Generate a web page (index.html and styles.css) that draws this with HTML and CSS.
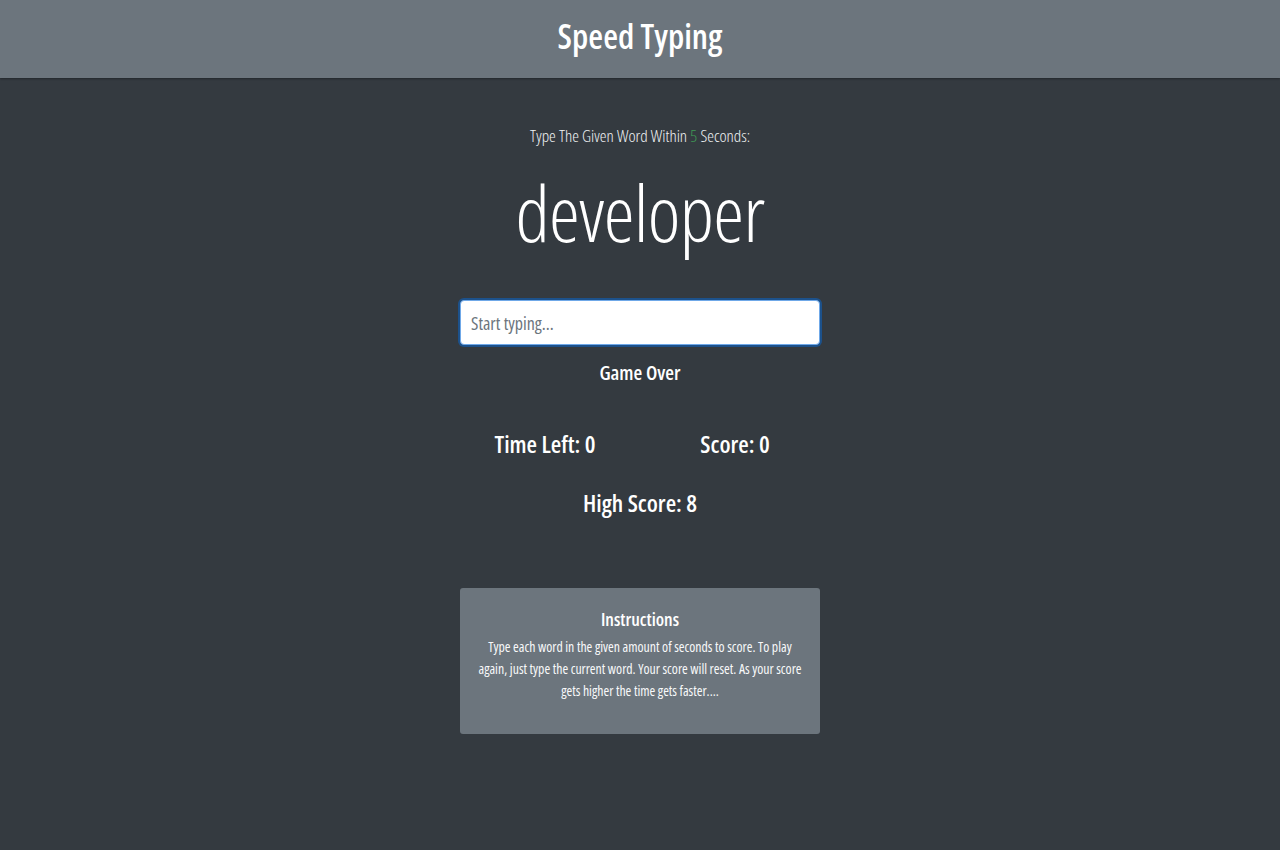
FILE: index.html
```html
<!DOCTYPE html>
<html lang="en">
<head>
<meta charset="utf-8">
<title>Speed Typing</title>
<link rel="stylesheet" href="styles.css">
</head>
<body>
<header class="topbar">
  <h1 class="brand">Speed Typing</h1>
</header>
<main class="game">
  <p class="lead">Type The Given Word Within <span class="secs">5</span> Seconds:</p>
  <h2 class="word">developer</h2>
  <input class="word-input" type="text" placeholder="Start typing..." autofocus>
  <h4 class="status">Game Over</h4>
  <div class="scores">
    <h3 class="stat">Time Left: 0</h3>
    <h3 class="stat">Score: 0</h3>
  </div>
  <h3 class="stat high">High Score: 8</h3>
  <section class="card">
    <h5 class="card-title">Instructions</h5>
    <p class="card-text">Type each word in the given amount of seconds to score. To play again, just type the current word. Your score will reset. As your score gets higher the time gets faster....</p>
  </section>
</main>
</body>
</html>
```
FILE: styles.css
```css
* { box-sizing: border-box; }
html, body { margin: 0; padding: 0; }
body {
  background: #343a40;
  color: #fff;
  font-family: "Open Sans", "Noto Sans", "Liberation Sans", sans-serif;
  font-stretch: 75%;
  min-height: 850px;
}
.topbar {
  height: 78px;
  padding-bottom: 5px;
  background: #6c757d;
  display: flex;
  align-items: center;
  justify-content: center;
  box-shadow: 0 1px 2px rgba(0,0,0,.35);
}
.brand {
  margin: 0;
  font-size: 34px;
  font-weight: 600;
  line-height: 1.2;
}
.game {
  display: flex;
  flex-direction: column;
  align-items: center;
  padding-top: 46px;
}
.lead {
  margin: 0;
  font-size: 17px;
  line-height: 24px;
  font-weight: 300;
  color: #f1f3f5;
}
.secs { color: #3f9a55; }
.word {
  margin: 16px 0 0;
  font-size: 78px;
  line-height: 96px;
  font-weight: 300;
  letter-spacing: -0.6px;
}
.word-input {
  margin-top: 40px;
  width: 360px;
  height: 45px;
  padding: 0 10px;
  font: inherit;
  font-size: 18px;
  color: #495057;
  background: #fff;
  border: 1px solid #6fa8e8;
  border-radius: 4px;
  box-shadow: 0 0 0 2px rgba(0,110,230,.45);
  outline: none;
}
.word-input::placeholder { color: #6c757d; }
.status {
  margin: 13px 0 0;
  font-size: 20px;
  line-height: 30px;
  font-weight: 600;
}
.scores {
  margin-top: 38px;
  display: grid;
  grid-template-columns: 190px 190px;
}
.stat {
  margin: 0;
  text-align: center;
  font-size: 24px;
  line-height: 36px;
  font-weight: 600;
}
.high { margin-top: 23px; }
.card {
  margin-top: 67px;
  width: 360px;
  height: 146px;
  background: #6c757d;
  border-radius: 3px;
  padding: 19px 16px 0;
  text-align: center;
}
.card-title {
  margin: 0;
  font-size: 18px;
  line-height: 24px;
  font-weight: 600;
}
.card-text {
  margin: 5px 0 0;
  font-size: 13.8px;
  line-height: 22px;
  color: #f8f9fa;
}
```
